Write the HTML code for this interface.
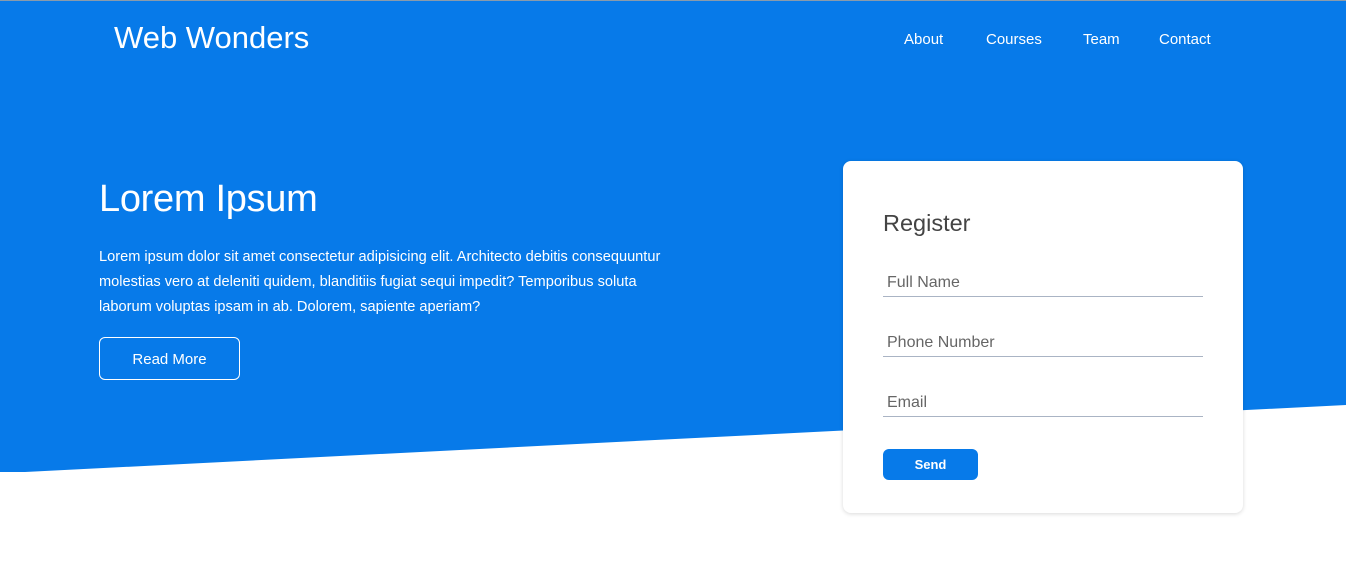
<!DOCTYPE html>
<html><head><meta charset="utf-8"><style>
*{margin:0;padding:0;box-sizing:border-box}
body{width:1346px;height:572px;overflow:hidden;background:#fff;font-family:"Liberation Sans",sans-serif;position:relative}
svg.bg{position:absolute;left:0;top:0}
.logo{position:absolute;left:114px;top:20px;color:#fff;font-size:31px;font-weight:300;letter-spacing:0px}
.nav{position:absolute;top:31px;color:#fff;font-size:15px}
h1{position:absolute;left:99px;top:178px;color:#fff;font-size:38px;font-weight:normal;letter-spacing:-0.3px}
p.lead{position:absolute;left:99px;top:245px;width:585px;color:#fff;font-size:14.6px;line-height:25px}
.btn{position:absolute;left:99px;top:337px;width:141px;height:43px;border:1px solid #fff;border-radius:6px;color:#fff;font-size:15px;text-align:center;line-height:43px}
.card{position:absolute;left:843px;top:161px;width:400px;height:352px;background:#fff;border-radius:8px;box-shadow:0 1px 4px rgba(0,0,0,.15)}
.card h2{position:absolute;left:40px;top:49px;font-size:23.5px;font-weight:normal;color:#444}
.inp{position:absolute;left:40px;width:320px;height:26px;border-bottom:1px solid #aab4c4;color:#666;font-size:16px;padding-left:4px;padding-top:3px}
.send{position:absolute;left:40px;top:288px;width:95px;height:31px;background:#077ae9;border-radius:6px;color:#fff;font-weight:bold;font-size:13px;text-align:center;line-height:31px}
</style></head><body>
<svg class="bg" width="1346" height="572"><polygon points="0,1 1346,1 1346,405 25,472 0,472" fill="#077ae9"/><rect x="0" y="0" width="1346" height="1" fill="#8a9bab"/></svg>
<div class="logo">Web Wonders</div>
<div class="nav" style="left:904px">About</div>
<div class="nav" style="left:986px">Courses</div>
<div class="nav" style="left:1083px">Team</div>
<div class="nav" style="left:1159px">Contact</div>
<h1>Lorem Ipsum</h1>
<p class="lead">Lorem ipsum dolor sit amet consectetur adipisicing elit. Architecto debitis consequuntur molestias vero at deleniti quidem, blanditiis fugiat sequi impedit? Temporibus soluta laborum voluptas ipsam in ab. Dolorem, sapiente aperiam?</p>
<div class="btn">Read More</div>
<div class="card">
<h2>Register</h2>
<div class="inp" style="top:110px">Full Name</div>
<div class="inp" style="top:170px">Phone Number</div>
<div class="inp" style="top:230px">Email</div>
<div class="send">Send</div>
</div>
</body></html>
